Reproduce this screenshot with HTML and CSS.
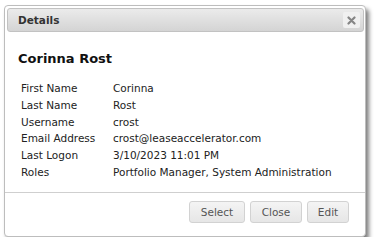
FILE: index.html
```html
<!DOCTYPE html>
<html>
<head>
<meta charset="utf-8">
<link rel="stylesheet" href="styles.css">
</head>
<body>
<div class="page">
  <div class="dialog">
    <div class="titlebar">
      <span class="title">Details</span>
      <span class="close">
        <svg width="9" height="9" viewBox="0 0 9 9"><path d="M1.5 1.5 L7.5 7.5 M7.5 1.5 L1.5 7.5" stroke="#858585" stroke-width="2.2" stroke-linecap="round"/></svg>
      </span>
    </div>
    <div class="content">
      <h1 class="name">Corinna Rost</h1>
      <table class="info">
        <tr><td class="label">First Name</td><td>Corinna</td></tr>
        <tr><td class="label">Last Name</td><td>Rost</td></tr>
        <tr><td class="label">Username</td><td>crost</td></tr>
        <tr><td class="label">Email Address</td><td>crost@leaseaccelerator.com</td></tr>
        <tr><td class="label">Last Logon</td><td>3/10/2023 11:01 PM</td></tr>
        <tr><td class="label">Roles</td><td>Portfolio Manager, System Administration</td></tr>
      </table>
    </div>
    <div class="footer">
      <button class="btn btn-select">Select</button>
      <button class="btn btn-close">Close</button>
      <button class="btn btn-edit">Edit</button>
    </div>
    <span class="dots"></span>
  </div>
</div>
</body>
</html>
```
FILE: styles.css
```css
html, body {
  margin: 0;
  padding: 0;
  background: #ffffff;
}
body {
  font-family: "DejaVu Sans", Verdana, sans-serif;
  color: #222;
}
.page {
  padding: 5px 0 0 4px;
}
.dialog {
  position: relative;
  box-sizing: border-box;
  width: 362px;
  height: 232px;
  border: 1px solid #bdbdbd;
  border-radius: 4px;
  background: #fff;
  box-shadow: 3px 4px 4px rgba(0, 0, 0, 0.5);
  display: flex;
  flex-direction: column;
}
.titlebar {
  margin: 2px 1px 0 2px;
  box-sizing: border-box;
  height: 24px;
  border: 1px solid #c2c2c2;
  border-radius: 3px;
  background: linear-gradient(#ebebeb, #d4d4d4);
  display: flex;
  align-items: center;
  justify-content: space-between;
  padding: 0 3px 0 10px;
}
.title {
  font-weight: bold;
  font-size: 10.5px;
  color: #333;
}
.close {
  width: 17px;
  height: 16px;
  border-radius: 2px;
  background: #f0f0f0;
  display: flex;
  align-items: center;
  justify-content: center;
}
.content {
  padding: 0 0 0 12px;
  flex: 1;
}
.name {
  margin: 19px 0 13px 1px;
  font-size: 13px;
  font-weight: bold;
  color: #111;
  line-height: 16px;
}
.info {
  border-collapse: collapse;
  font-size: 10.5px;
  color: #222;
}
.info td {
  padding: 0;
  height: 16.8px;
  line-height: 16.8px;
  white-space: nowrap;
}
.info td.label {
  width: 92px;
  padding-left: 4px;
}
.footer {
  border-top: 1px solid #cfcfcf;
  display: flex;
  justify-content: flex-end;
  gap: 5px;
  padding: 8px 16px 13px 0;
}
.btn {
  box-sizing: border-box;
  height: 22px;
  border: 1px solid #d2d2d2;
  border-radius: 3px;
  background: linear-gradient(#f4f4f4, #e6e6e6);
  font-family: "DejaVu Sans", Verdana, sans-serif;
  font-size: 10.5px;
  color: #555;
  padding: 0;
}
.btn-select { width: 56px; }
.btn-close { width: 52px; }
.btn-edit { width: 42px; }
.dots {
  position: absolute;
  left: 7px;
  bottom: -4px;
  width: 27px;
  height: 0;
  border-top: 1px dotted #555;
}
```
